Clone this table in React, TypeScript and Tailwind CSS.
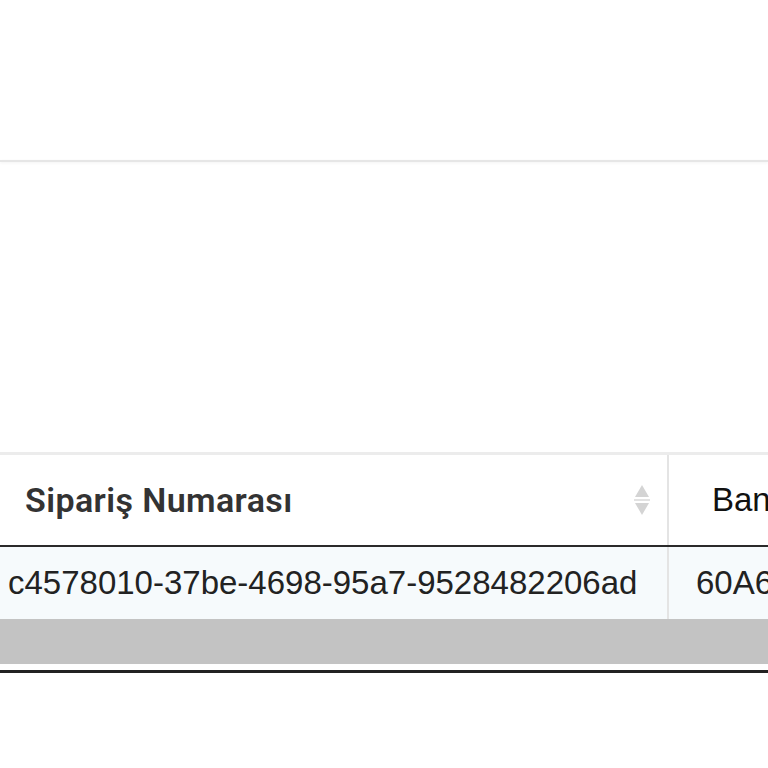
import React from "react";

function SortIcon() {
  return (
    <svg width="22" height="36" viewBox="0 0 22 36" className="shrink-0">
      <path d="M11 3 L18 15 L4 15 Z" fill="#d4d4d4" />
      <rect x="3" y="17" width="16" height="2" fill="#e2e2e2" />
      <path d="M11 33 L18 21 L4 21 Z" fill="#d4d4d4" />
    </svg>
  );
}

export default function App() {
  return (
    <div className="w-[768px] h-[768px] bg-white overflow-hidden">
      <div className="h-[160px]" />
      <div className="h-[2px] bg-[#e6e6e6] shadow-[0_1px_3px_rgba(0,0,0,0.06)]" />
      <div className="h-[290px]" />

      {/* TABLE */}
      <div className="w-[900px] border-t-[3px] border-[#ececec]">
        <div className="flex h-[92px] border-b-[2px] border-[#2a2a2a]">
          <div className="w-[669px] shrink-0 flex items-center justify-between pl-[25px] pr-[14px] border-r-[2px] border-[#e4e4e4]">
            <span
              className="text-[34px] font-semibold text-[#333] tracking-[0.4px]"
              style={{ fontFamily: "Roboto, 'Noto Sans', sans-serif" }}
            >
              Sipariş Numarası
            </span>
            <SortIcon />
          </div>
          <div className="flex-1 flex items-center pl-[43px]">
            <span
              className="text-[33px] text-[#111] whitespace-nowrap"
              style={{ fontFamily: "'Liberation Sans', Arial, sans-serif" }}
            >
              Banka Referans No
            </span>
          </div>
        </div>

        <div className="flex h-[72px] bg-[#f6fafc]">
          <div className="w-[669px] shrink-0 flex items-center pl-[8px] border-r-[2px] border-[#e4e4e4]">
            <span
              className="text-[33px] text-[#222] whitespace-nowrap"
              style={{ fontFamily: "'Liberation Sans', Arial, sans-serif" }}
            >
              c4578010-37be-4698-95a7-9528482206ad
            </span>
          </div>
          <div className="flex-1 flex items-center pl-[27px]">
            <span
              className="text-[33px] text-[#222] whitespace-nowrap"
              style={{ fontFamily: "'Liberation Sans', Arial, sans-serif" }}
            >
              60A6B21F4C
            </span>
          </div>
        </div>

        <div className="h-[45px] bg-[#c3c3c3]" />
        <div className="h-[6px] bg-white" />
        <div className="h-[3px] bg-[#222]" />
      </div>
    </div>
  );
}
